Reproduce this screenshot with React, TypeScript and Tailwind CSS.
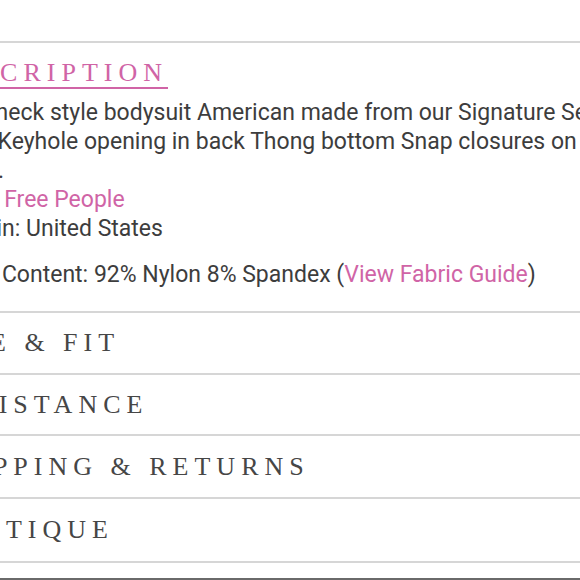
import React from "react";

// Product details accordion, cropped on the left like the original screenshot
const PINK = "text-[#d064a6]";
const serif = { fontFamily: '"Liberation Serif", serif' };

const sections = [
  { title: "SIZE & FIT", h: "h-[62px]" },
  { title: "ASSISTANCE", h: "h-[61px]" },
  { title: "SHIPPING & RETURNS", h: "h-[63px]" },
  { title: "BOUTIQUE", h: "h-[64px]" },
];

export default function App() {
  return (
    <div className="w-[580px] h-[580px] overflow-hidden bg-white">
      <div className="-ml-[67px] w-[800px] pt-[41px]">
        {/* Description */}
        <section className="border-t-2 border-[#d6d6d6] pt-[17px] pb-[22px]">
          <h2
            className={`block w-fit border-b-2 border-[#d064a6] pb-[1px] text-[26px] leading-[26px] tracking-[6px] ${PINK}`}
            style={serif}
          >
            DESCRIPTION
          </h2>
          <div
            className="mt-[9px] text-[23px] leading-[29px] text-[#3d3d3d] whitespace-nowrap"
            style={{ fontFamily: "Roboto, sans-serif" }}
          >
            <p>Mock neck style bodysuit American made from our Signature Seamless</p>
            <p>fabric Keyhole opening in back Thong bottom Snap closures on the</p>
            <p>crotch.</p>
            <p>
              Brand: <span className={PINK}>Free People</span>
            </p>
            <p>Made in: United States</p>
            <p className="mt-[17px]">
              Fabric Content: 92% Nylon 8% Spandex (
              <span className={PINK}>View Fabric Guide</span>)
            </p>
          </div>
        </section>

        {/* Collapsed rows */}
        {sections.map((s) => (
          <div
            key={s.title}
            className={`${s.h} border-t-2 border-[#d6d6d6] flex items-center`}
          >
            <span
              className="text-[26px] leading-none tracking-[6px] text-[#464646] whitespace-nowrap"
              style={serif}
            >
              {s.title}
            </span>
          </div>
        ))}
        <div className="border-t-2 border-[#d6d6d6] h-[17px]" />
        <div className="border-t-2 border-[#6a6a6a]" />
      </div>
    </div>
  );
}
